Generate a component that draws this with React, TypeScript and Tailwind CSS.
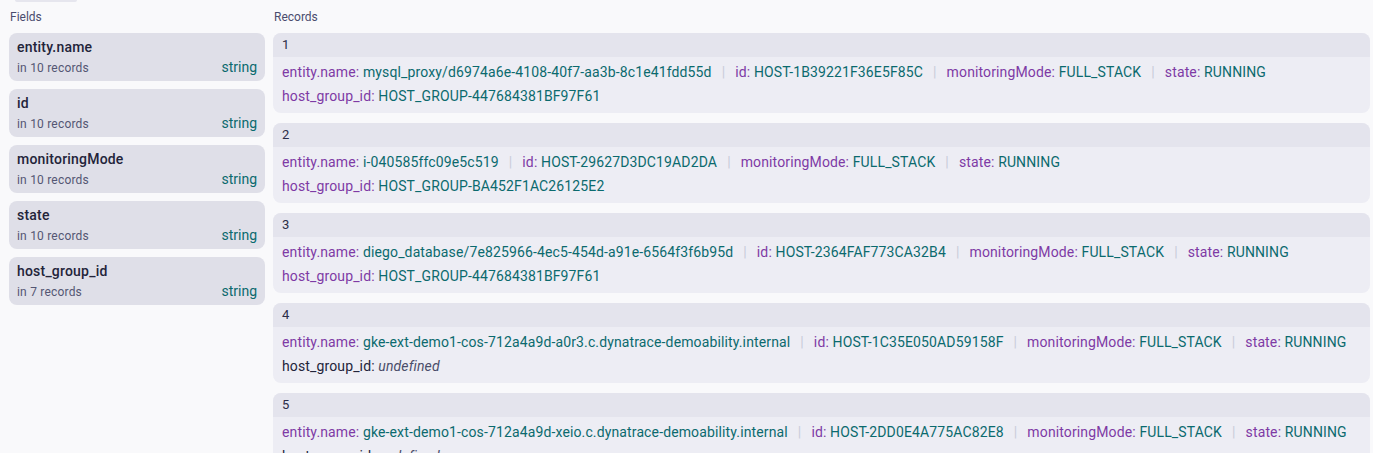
const fields = [
  { name: "entity.name", count: 10 },
  { name: "id", count: 10 },
  { name: "monitoringMode", count: 10 },
  { name: "state", count: 10 },
  { name: "host_group_id", count: 7 },
];

type Rec = { entity: string; id: string; group?: string };

const records: Rec[] = [
  { entity: "mysql_proxy/d6974a6e-4108-40f7-aa3b-8c1e41fdd55d", id: "HOST-1B39221F36E5F85C", group: "HOST_GROUP-447684381BF97F61" },
  { entity: "i-040585ffc09e5c519", id: "HOST-29627D3DC19AD2DA", group: "HOST_GROUP-BA452F1AC26125E2" },
  { entity: "diego_database/7e825966-4ec5-454d-a91e-6564f3f6b95d", id: "HOST-2364FAF773CA32B4", group: "HOST_GROUP-447684381BF97F61" },
  { entity: "gke-ext-demo1-cos-712a4a9d-a0r3.c.dynatrace-demoability.internal", id: "HOST-1C35E050AD59158F" },
  { entity: "gke-ext-demo1-cos-712a4a9d-xeio.c.dynatrace-demoability.internal", id: "HOST-2DD0E4A775AC82E8" },
];

function Sep() {
  return <span className="mx-[10px] text-[#c9ccd9]">|</span>;
}

function Pair({ k, v }: { k: string; v: string }) {
  return (
    <span>
      <span className="text-[#7e3aa5]">{k}:</span> <span className="text-[#0b6a6e]">{v}</span>
    </span>
  );
}

function RecordCard({ n, r }: { n: number; r: Rec }) {
  return (
    <div className="rounded-lg overflow-hidden bg-[#ededf4] h-[80px]">
      <div className="h-6 bg-[#e4e4ed] px-[9px] leading-6 text-[13px] text-[#2b2d48]">{n}</div>
      <div className="px-[9px] pt-[3px] text-[14px] leading-6 tracking-[0.13px]">
        <div className="whitespace-nowrap">
          <Pair k="entity.name" v={r.entity} />
          <Sep />
          <Pair k="id" v={r.id} />
          <Sep />
          <Pair k="monitoringMode" v="FULL_STACK" />
          <Sep />
          <Pair k="state" v="RUNNING" />
        </div>
        <div className="whitespace-nowrap">
          {r.group ? (
            <Pair k="host_group_id" v={r.group} />
          ) : (
            <span>
              <span className="text-[#23243a]">host_group_id:</span>{" "}
              <span className="italic text-[#4b4d6a]">undefined</span>
            </span>
          )}
        </div>
      </div>
    </div>
  );
}

export default function App() {
  return (
    <div className="h-[453px] overflow-hidden bg-[#f9f9fb] text-[#2b2d48]" style={{ fontFamily: "Roboto, 'Noto Sans', sans-serif" }}>
      <div className="ml-[15px] w-[62px] h-[2px] rounded-b bg-[#e6e6ee]" />
      <div className="flex gap-2 pl-[9px] pr-[3px] pt-[7px]">
        <div className="w-[256px] shrink-0">
          <h3 className="text-[12px] leading-4 text-[#4a4c6e] mb-2 pl-px">Fields</h3>
          <div className="flex flex-col gap-2">
            {fields.map((f) => (
              <div key={f.name} className="h-12 rounded-lg bg-[#dfdfe8] px-2 pt-[4px]">
                <div className="text-[14px] leading-5 font-medium tracking-[0.2px] text-[#23243a]">{f.name}</div>
                <div className="flex justify-between items-baseline">
                  <span className="text-[12px] leading-5 tracking-[0.2px] text-[#545673]">in {f.count} records</span>
                  <span className="text-[14px] leading-5 text-[#0b6a6e]">string</span>
                </div>
              </div>
            ))}
          </div>
        </div>
        <div className="flex-1 min-w-0">
          <h3 className="text-[12px] leading-4 text-[#4a4c6e] mb-2 pl-px">Records</h3>
          <div className="flex flex-col gap-[10px]">
            {records.map((r, i) => (
              <RecordCard key={i} n={i + 1} r={r} />
            ))}
          </div>
        </div>
      </div>
    </div>
  );
}
